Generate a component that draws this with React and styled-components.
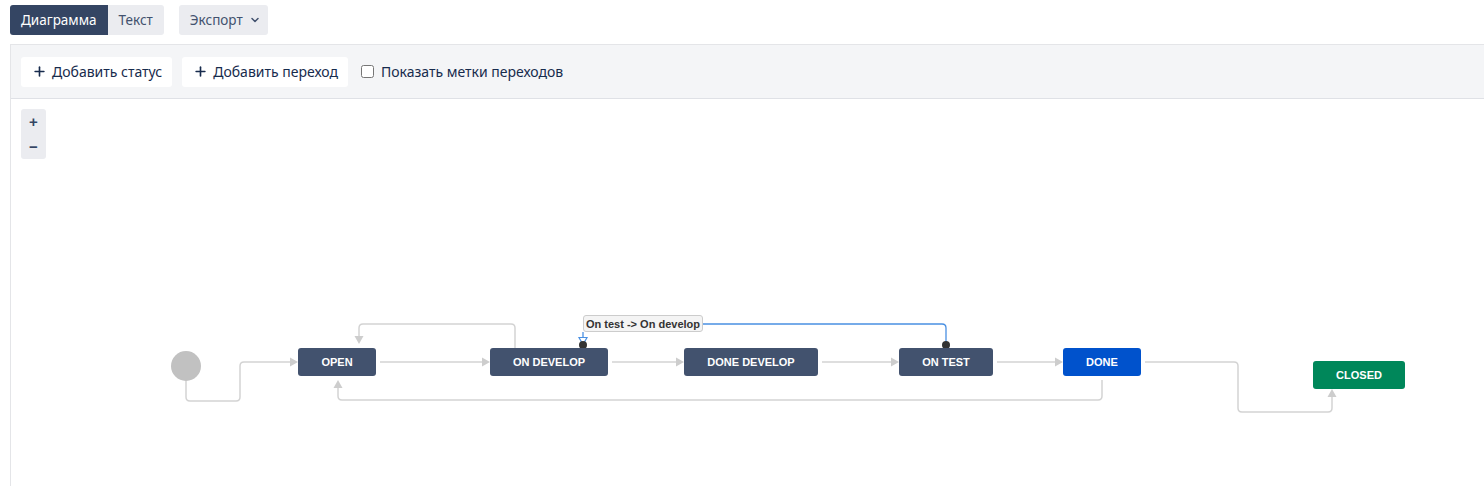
import React, { useState } from 'react';
import styled, { createGlobalStyle } from 'styled-components';
import { Plus, ChevronDown } from 'lucide-react';

const GlobalStyle = createGlobalStyle`
  html, body {
    margin: 0;
    padding: 0;
    background: #fff;
    font-family: "Noto Sans", "Open Sans", sans-serif;
    color: #172b4d;
  }
`;

// page offset of the canvas origin
const OX = 11;
const OY = 99;

const nodes = [
  { id: 'open', label: 'OPEN', x: 298, y: 348, w: 78, kind: 'dark' },
  { id: 'ondev', label: 'ON DEVELOP', x: 490, y: 348, w: 118, kind: 'dark' },
  { id: 'donedev', label: 'DONE DEVELOP', x: 684, y: 348, w: 134, kind: 'dark' },
  { id: 'ontest', label: 'ON TEST', x: 899, y: 348, w: 94, kind: 'dark' },
  { id: 'done', label: 'DONE', x: 1063, y: 348, w: 78, kind: 'blue' },
  { id: 'closed', label: 'CLOSED', x: 1313, y: 361, w: 92, kind: 'green' }
];

const edges = [
  'M186 381 V397 Q186 401 190 401 H236 Q240 401 240 397 V366 Q240 362 244 362 H290',
  'M380 362 H482',
  'M612 362 H676',
  'M822 362 H891',
  'M997 362 H1055',
  'M1145 362 H1234 Q1238 362 1238 366 V408 Q1238 412 1242 412 H1328 Q1332 412 1332 408 V397',
  'M1102 380 V396 Q1102 400 1098 400 H342 Q338 400 338 396 V388',
  'M515 348 V328 Q515 324 511 324 H363 Q359 324 359 328 V336'
];

// arrow heads: tip point and direction
const arrows = [
  { x: 298, y: 362, d: 'r' },
  { x: 490, y: 362, d: 'r' },
  { x: 684, y: 362, d: 'r' },
  { x: 899, y: 362, d: 'r' },
  { x: 1063, y: 362, d: 'r' },
  { x: 1332, y: 389, d: 'u' },
  { x: 338, y: 380, d: 'u' },
  { x: 359, y: 344, d: 'd' }
];

const arrowPoints = ({ x, y, d }) => {
  if (d === 'r') return `${x - 8},${y - 4.5} ${x},${y} ${x - 8},${y + 4.5}`;
  if (d === 'u') return `${x - 4.5},${y + 8} ${x},${y} ${x + 4.5},${y + 8}`;
  return `${x - 4.5},${y - 8} ${x},${y} ${x + 4.5},${y - 8}`;
};

const nodeColors = {
  dark: '#42526e',
  blue: '#0052cc',
  green: '#00875a'
};

function App() {
  const [tab, setTab] = useState('diagram');
  const [showLabels, setShowLabels] = useState(false);

  return (
    <>
      <GlobalStyle />
      <Page>
        <TopBar>
          <TabGroup>
            <Tab active={tab === 'diagram'} onClick={() => setTab('diagram')}>
              Диаграмма
            </Tab>
            <Tab active={tab === 'text'} onClick={() => setTab('text')}>
              Текст
            </Tab>
          </TabGroup>
          <ExportButton>
            <span>Экспорт</span>
            <ChevronDown size={12} strokeWidth={3} />
          </ExportButton>
        </TopBar>

        <Panel>
          <Toolbar>
            <ToolButton>
              <Plus size={15} strokeWidth={2.6} />
              Добавить статус
            </ToolButton>
            <ToolButton>
              <Plus size={15} strokeWidth={2.6} />
              Добавить переход
            </ToolButton>
            <CheckLabel>
              <input
                type="checkbox"
                checked={showLabels}
                onChange={(e) => setShowLabels(e.target.checked)}
              />
              Показать метки переходов
            </CheckLabel>
          </Toolbar>

          <Canvas>
            <ZoomControls>
              <ZoomButton>+</ZoomButton>
              <ZoomButton>−</ZoomButton>
            </ZoomControls>

            <Edges width="1473" height="387" viewBox={`${OX} ${OY} 1473 387`}>
              <circle cx="186" cy="366" r="15" fill="#c1c1c1" />
              {edges.map((d, i) => (
                <path
                  key={i}
                  d={d}
                  fill="none"
                  stroke="#d3d3d3"
                  strokeWidth="1.5"
                />
              ))}
              {arrows.map((a, i) => (
                <polygon key={i} points={arrowPoints(a)} fill="#cdcdcd" />
              ))}
              {/* selected transition: ON TEST -> ON DEVELOP */}
              <path
                d="M946 345 V328 Q946 324 942 324 H703"
                fill="none"
                stroke="#4a90e2"
                strokeWidth="1.3"
              />
              <path d="M583 332 V338" stroke="#4a90e2" strokeWidth="1.3" />
              <polygon
                points="579,337.5 587,337.5 583,344.5"
                fill="#fff"
                stroke="#4a90e2"
                strokeWidth="1.2"
              />
              <circle cx="583" cy="345" r="4" fill="#333" />
              <circle cx="946" cy="345" r="4" fill="#333" />
            </Edges>

            {nodes.map((n) => (
              <StatusNode
                key={n.id}
                kind={n.kind}
                style={{ left: n.x - OX, top: n.y - OY, width: n.w }}
              >
                {n.label}
              </StatusNode>
            ))}

            <EdgeLabel style={{ left: 583 - OX, top: 315 - OY }}>
              On test -&gt; On develop
            </EdgeLabel>
          </Canvas>
        </Panel>
      </Page>
    </>
  );
}

export default App;

const Page = styled.div`
  width: 1484px;
  height: 486px;
  overflow: hidden;
`;

const TopBar = styled.div`
  display: flex;
  align-items: center;
  gap: 15px;
  padding: 5px 0 0 10px;
  height: 30px;
`;

const TabGroup = styled.div`
  display: flex;
  border-radius: 3px;
  overflow: hidden;
`;

const Tab = styled.button`
  height: 30px;
  border: none;
  padding: 0 11px;
  font-family: inherit;
  font-size: 13.5px;
  cursor: pointer;
  background: ${(p) => (p.active ? '#344563' : '#ebecf0')};
  color: ${(p) => (p.active ? '#ffffff' : '#42526e')};
`;

const ExportButton = styled.button`
  height: 30px;
  width: 89px;
  border: none;
  border-radius: 3px;
  background: #ebecf0;
  color: #42526e;
  font-family: inherit;
  font-size: 13.5px;
  display: flex;
  align-items: center;
  justify-content: space-between;
  padding: 0 7px 0 11px;
  cursor: pointer;
`;

const Panel = styled.div`
  margin: 9px 0 0 10px;
  border-top: 1px solid #e4e5e8;
  border-left: 1px solid #e4e5e8;
`;

const Toolbar = styled.div`
  height: 54px;
  box-sizing: border-box;
  background: #f4f5f7;
  border-bottom: 1px solid #dfe1e6;
  display: flex;
  align-items: center;
  gap: 10px;
  padding: 0 10px;
`;

const ToolButton = styled.button`
  height: 30px;
  border: none;
  border-radius: 3px;
  background: #ffffff;
  color: #172b4d;
  font-family: inherit;
  font-size: 14px;
  display: flex;
  align-items: center;
  gap: 5px;
  padding: 0 10px 0 11px;
  cursor: pointer;
`;

const CheckLabel = styled.label`
  display: flex;
  align-items: center;
  gap: 6px;
  font-size: 14px;
  color: #172b4d;
  margin-left: 3px;

  & input {
    width: 13px;
    height: 13px;
    margin: 0 1px 0 0;
  }
`;

const Canvas = styled.div`
  position: relative;
  height: 387px;
  background: #ffffff;
`;

const ZoomControls = styled.div`
  position: absolute;
  left: 10px;
  top: 10px;
  width: 25px;
  height: 50px;
  border-radius: 3px;
  background: #ebecf0;
  display: flex;
  flex-direction: column;
  z-index: 2;
`;

const ZoomButton = styled.div`
  flex: 1;
  display: flex;
  align-items: center;
  justify-content: center;
  font-family: "Liberation Sans", Arial, sans-serif;
  font-weight: 700;
  font-size: 15px;
  color: #344563;
  cursor: pointer;
`;

const Edges = styled.svg`
  position: absolute;
  left: 0;
  top: 0;
`;

const StatusNode = styled.div`
  position: absolute;
  height: 28px;
  box-sizing: border-box;
  border-radius: 3px;
  background: ${(p) => nodeColors[p.kind]};
  color: #ffffff;
  font-family: "Liberation Sans", Arial, sans-serif;
  font-weight: 700;
  font-size: 11px;
  display: flex;
  align-items: center;
  justify-content: center;
`;

const EdgeLabel = styled.div`
  position: absolute;
  height: 17px;
  box-sizing: border-box;
  padding: 0 2px;
  border: 1px solid #cccccc;
  border-radius: 3px;
  background: #f4f4f4;
  color: #333333;
  font-family: "Liberation Sans", Arial, sans-serif;
  font-weight: 700;
  font-size: 11px;
  display: flex;
  align-items: center;
  white-space: nowrap;
`;
